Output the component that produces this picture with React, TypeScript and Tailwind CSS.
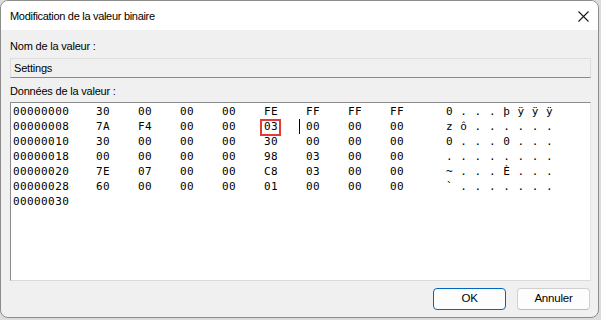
const rows: { offset: string; bytes: string[]; ascii: string[] }[] = [
  { offset: '00000000', bytes: ['30', '00', '00', '00', 'FE', 'FF', 'FF', 'FF'], ascii: ['0', '.', '.', '.', 'þ', 'ÿ', 'ÿ', 'ÿ'] },
  { offset: '00000008', bytes: ['7A', 'F4', '00', '00', '03', '00', '00', '00'], ascii: ['z', 'ô', '.', '.', '.', '.', '.', '.'] },
  { offset: '00000010', bytes: ['30', '00', '00', '00', '30', '00', '00', '00'], ascii: ['0', '.', '.', '.', '0', '.', '.', '.'] },
  { offset: '00000018', bytes: ['00', '00', '00', '00', '98', '03', '00', '00'], ascii: ['.', '.', '.', '.', '.', '.', '.', '.'] },
  { offset: '00000020', bytes: ['7E', '07', '00', '00', 'C8', '03', '00', '00'], ascii: ['~', '.', '.', '.', 'È', '.', '.', '.'] },
  { offset: '00000028', bytes: ['60', '00', '00', '00', '01', '00', '00', '00'], ascii: ['`', '.', '.', '.', '.', '.', '.', '.'] },
  { offset: '00000030', bytes: [], ascii: [] },
];

function HexRow({ row, index }: { row: (typeof rows)[number]; index: number }) {
  return (
    <div className="flex h-[15px] leading-[15px]">
      <span className="w-[83px] shrink-0">{row.offset}</span>
      {row.bytes.map((b, i) => (
        <span key={i} className="relative w-[42px] shrink-0">
          {/* highlighted byte with caret after it */}
          {index === 1 && i === 4 && (
            <>
              <span className="absolute left-[-4px] top-[0px] h-[17px] w-[21px] border-2 border-[#e53935]" />
              <span className="absolute left-[35px] top-[0px] h-[15px] w-[1px] bg-black" />
            </>
          )}
          {b}
        </span>
      ))}
      {row.ascii.length > 0 && <span className="w-[14px] shrink-0" />}
      {row.ascii.map((c, i) => (
        <span key={i} className="w-[14.3px] shrink-0">
          {c}
        </span>
      ))}
    </div>
  );
}

export default function App() {
  return (
    <div className="h-[320px] w-[601px] bg-[#dcdcdc] font-['Liberation_Sans',Arial,sans-serif] text-[11px] tracking-[-0.2px] text-black">
      <div className="flex h-[318px] w-[599px] flex-col overflow-hidden rounded-[8px] border border-[#8c8c8c] bg-[#f0f0f0]">
        {/* Title bar */}
        <div className="flex h-[29px] shrink-0 items-center justify-between bg-white pl-[9px] pr-[8px]">
          <span className="pt-[1px] text-[11px] tracking-[-0.3px]">Modification de la valeur binaire</span>
          <svg width="11" height="11" viewBox="0 0 11 11" className="mr-[1px] mt-[1px]">
            <path d="M0.5 0.5 L10.5 10.5 M10.5 0.5 L0.5 10.5" stroke="#1a1a1a" strokeWidth="1.1" />
          </svg>
        </div>

        {/* Body */}
        <div className="flex flex-1 flex-col pl-[9px]">
          <div className="mt-[8px] h-[16px] leading-[16px]">Nom de la valeur :</div>
          <div className="mt-[4px] flex h-[20px] w-[581px] items-center border border-[#dedede] border-b-[#8a8a8a] bg-[#f0f0f0] pl-[3px]">
            Settings
          </div>
          <div className="mt-[5px] h-[16px] leading-[16px]">Données de la valeur :</div>
          <div className="mt-[3px] h-[179px] w-[581px] border border-[#8c8c8c] border-b-[#dadada] border-r-[#e6e6e6] bg-white pl-[2px] pt-[1px] font-['DejaVu_Sans_Mono',monospace] text-[11px] tracking-[0.4px]">
            {rows.map((row, i) => (
              <HexRow key={i} row={row} index={i} />
            ))}
          </div>
          <div className="mt-[7px] flex w-[581px] justify-end gap-[11px] pr-[1px] text-[11.5px]">
            <button className="flex h-[22px] w-[73px] items-center justify-center rounded-[4px] border border-[#0067c0] bg-[#fdfdfd]">
              OK
            </button>
            <button className="flex h-[22px] w-[73px] items-center justify-center rounded-[4px] border border-[#d0d0d0] border-b-[#bcbcbc] bg-[#fdfdfd]">
              Annuler
            </button>
          </div>
        </div>
      </div>
    </div>
  );
}
